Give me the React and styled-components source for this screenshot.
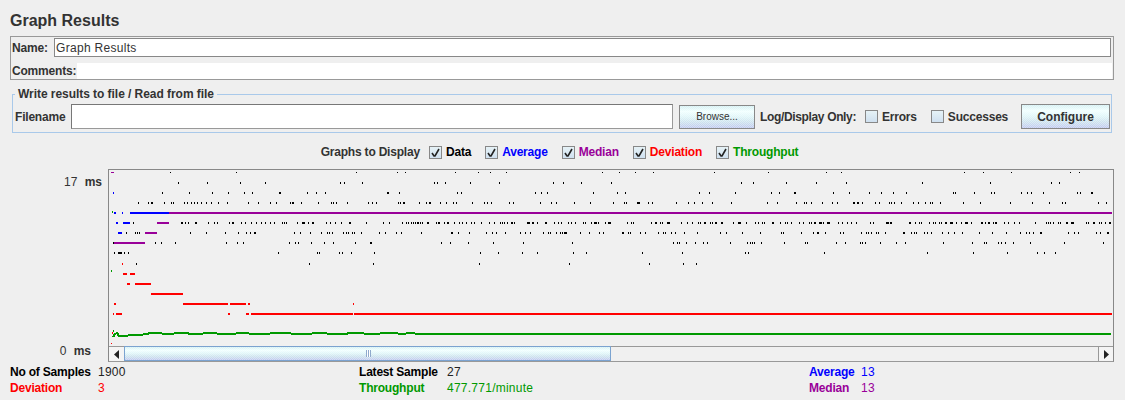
import React from "react";
import styled, { createGlobalStyle } from "styled-components";

const BLACK = "#000000";
const BLUE = "#0000ff";
const PURPLE = "#990099";
const RED = "#ff0000";
const GREEN = "#009900";

const GlobalStyle = createGlobalStyle`
  html, body {
    margin: 0;
    height: 400px;
    overflow: hidden;
    background: #efefef;
  }
  * {
    box-sizing: border-box;
  }
`;

// java metal look: a gradient with a fine dither over it
const SHINE = `repeating-conic-gradient(rgba(255, 255, 255, 0.35) 0 25%, transparent 0 50%) 0 0 / 2px 2px,
  linear-gradient(180deg, #d4f0f3 0%, #f0ffff 25%, #def5f8 50%, #cde3ee 72%, #bfc9ef 100%)`;

const Page = styled.div`
  width: 1125px;
  height: 400px;
  padding: 9px 11px 0 10px;
  font-family: "Liberation Sans", Arial, sans-serif;
  font-size: 12px;
  color: #333333;
`;

const Title = styled.h1`
  margin: 0;
  height: 27px;
  line-height: 24px;
  font-size: 16px;
  font-weight: bold;
`;

const NamePanel = styled.div`
  height: 44px;
  border: 1px solid #999999;
  padding: 1px 1px 0 0;
`;

const Row = styled.div`
  display: flex;
  align-items: center;
  height: ${({ height }) => height}px;
  margin-bottom: ${({ below }) => below || 0}px;
`;

const BoldLabel = styled.span`
  font-weight: bold;
  white-space: nowrap;
  letter-spacing: ${({ tight }) => (tight ? "-0.35px" : "-0.2px")};
  color: ${({ color }) => color || "#333333"};
  margin-right: ${({ gap }) => gap || 0}px;
  margin-left: ${({ left }) => left || 0}px;
  width: ${({ width }) => (width ? `${width}px` : "auto")};
`;

const NameInput = styled.div`
  flex: 1;
  height: 19px;
  margin-right: 1px;
  padding: 1px 0 0 1px;
  line-height: 17px;
  background: #ffffff;
  border: 1px solid #888888;
  letter-spacing: 0.3px;
`;

const CommentArea = styled.div`
  flex: 1;
  align-self: stretch;
  background: #ffffff;
`;

const FileFieldset = styled.fieldset`
  margin: 7px 2px 0;
  padding: 3px 1px 3px 2px;
  border: 1px solid #a9c9ea;
  min-width: 0;
`;

const Legend = styled.legend`
  margin-left: 0;
  padding: 0 3px;
  height: 14px;
  line-height: 15px;
  font-weight: bold;
  letter-spacing: -0.05px;
`;

const FileRow = styled.div`
  display: flex;
  align-items: center;
  height: 25px;
`;

const FileInput = styled.div`
  width: 602px;
  height: 25px;
  margin-right: 6px;
  background: #ffffff;
  border: 1px solid #999999;
  border-top-color: #777777;
  border-left-color: #777777;
`;

const Button = styled.button`
  width: ${({ width }) => width}px;
  height: ${({ height }) => height}px;
  margin-left: ${({ push }) => (push ? "auto" : 0)};
  padding: 0;
  border: 1px solid #888888;
  background: ${SHINE};
  font-family: inherit;
  font-size: ${({ small }) => (small ? "10px" : "12px")};
  font-weight: ${({ small }) => (small ? "normal" : "bold")};
  color: #333333;
`;

const Option = styled.label`
  display: flex;
  align-items: center;
  gap: 4px;
  margin-left: ${({ left }) => left}px;
  font-weight: bold;
  letter-spacing: -0.2px;
  color: ${({ color }) => color || "#333333"};
`;

const Box = styled.span`
  display: flex;
  width: 13px;
  height: 13px;
  border: 1px solid #888888;
  background: linear-gradient(180deg, #e6f2f6 0%, #cfe0f0 100%);
`;

const Check = ({ checked, color, label, left }) => (
  <Option color={color} left={left}>
    <Box>
      {checked && (
        <svg width="11" height="11" viewBox="0 0 11 11">
          <path d="M2 6l2 3 1 0 4-7" fill="none" stroke="#222222" strokeWidth="1.6" />
        </svg>
      )}
    </Box>
    {label}
  </Option>
);

const GraphsRow = styled.div`
  display: flex;
  align-items: center;
  justify-content: center;
  height: 36px;
  padding: 2px 5px 0 0;
  font-weight: bold;
  letter-spacing: -0.2px;
`;

const ChartSection = styled.div`
  display: flex;
  height: 193px;
`;

const Axis = styled.div`
  width: 98px;
  position: relative;
`;

const AxisLabel = styled.div`
  position: absolute;
  right: ${({ right }) => right}px;
  top: ${({ top }) => top}px;
  white-space: nowrap;
  word-spacing: 4px;
  b {
    font-weight: bold;
  }
`;

const Plot = styled.div`
  width: 1006px;
  border: 1px solid #888888;
  border-bottom: 1px solid #999999;
  background: #f0f0f0;
`;

const PlotSvg = styled.svg`
  display: block;
  width: 1004px;
  height: 176px;
`;

const Scrollbar = styled.div`
  display: flex;
  height: 15px;
  border-top: 1px solid #999999;
`;

const ArrowButton = styled.div`
  display: flex;
  align-items: center;
  justify-content: center;
  width: 15px;
  background: #f4f4f4;
  border-left: ${({ right }) => (right ? "1px solid #999999" : "0")};
`;

const Thumb = styled.div`
  display: flex;
  align-items: center;
  width: 487px;
  margin-top: -1px;
  padding-left: 241px;
  border: 1px solid #7ba3d0;
  background: ${SHINE};
`;

const Grip = styled.div`
  width: 5px;
  height: 7px;
  background: repeating-linear-gradient(90deg, #8fa9cc 0 1px, #ffffff 1px 2px);
`;

const Track = styled.div`
  flex: 1;
`;

const Stats = styled.div`
  display: grid;
  grid-template-columns: 88px 261px 88px 362px 52px 1fr;
  grid-auto-rows: 16px;
  align-items: center;
  margin-top: 2px;
`;

const StatValue = styled.span`
  color: ${({ color }) => color};
  letter-spacing: 0.25px;
`;

// x positions read off the screen, y is the top of each row of dots
const DOTS = [
  [172, 1, { 0: "511 709", 280: "229 352 376 526 595 631 679", 570: "97 148 196 250 433 595 769 814", 845: "358 415 499 676 703" }],
  [182, 2, { 0: "535 622 721 796", 280: "181 193 247 463 472 496 571 658 820 850", 570: "34 124 514 550 649 739 829", 845: "4 232 436 619 643" }],
  [192, 2, { 0: "487 568 637 685 733 757 838", 280: "1 82 109 136 322:2 358 532 544 766 784 802", 570: "70 142 166 388 418 496 604 628 673:2 790 838", 845: "13 73 109 145 184 325 331 388 439 448 529 547 559 595 697 706 739:2" }],
  [202, 2, { 0: "415 445 454:2 493 514 520 553 562 574 583 592 604 619 634 655 682 745 775 811 829", 280: "31 37:2 64 115 154 160 169 202 265 277 289 355 361 370:2 418 439 448:2 481 499 520 529 577 613 622 634 688 700 781 814 829 883", 570: "13 61 130 163 169 202:3 235 247 319 355 373 397 427 484 592 622 679 703 709 724 757 787 802", 845: "25:2 37:2 52 91 103 133 139 148 169 205 220 241 256 262 286 355 406 496 562 613 652 661 760 784" }],
  [222, 2, { 0: "400 543:2 556 565 586:2 625 643 652 688 697:2 724 736 754 769 784 796 811 823", 280: "7 13 19 52 67:3 85 97:2 139 151 166 184 208:2 259 310 328 367 379 385 394 400 406 412:2 421 427 442:2 469 475:2 493 502:2 523 538 547 559 574 583 604 628 643 661 667 673 682 694:2 703 742:3 757:2 772 796:2 823 835 844 865 874", 570: "4 16 40 46 64 73:3 85 106 115:3 172 184 190 244 256:2 271 277 292:3 334 352 367 385 391 403:2 421 427 436:2 454:2 490 505:3 529 556 565 577 583 607:2 631 646 652 664 688 700 718 724 733:2 748:3 760 772:3 805 817", 845: "7 19 34 76 85 124:3 136:2 193:2 211 223 229 253 265 271 283 289 301:2 316:3 334 349 361:3 379 409:2 421 430:2 445 451:2 478 490 508 523 571 604 610 616 625 640 646 664:2 679:3 724 730 745:2 763 769 781 793:2" }],
  [232, 2, { 0: "379 406 412 418 571 619 676 715 739 751 763:2", 280: "43 61 91 124 142 148 157 190 199 205 217 223 244 298 316 349 364 424 514:2 535 568 619 637 649 676 721 736 751 790 805 811 829 841 847 853:3", 570: "31 58 88 100 157:2 175 181 211 226 265 280 286 304 316 343 382 451 469 517 571 634 640 694 730 742:2 766 811 820", 845: "49 64 70 79 94 100 121 175:2 199 208 214 238 247 259 292 310 328 352 403 442 484 526 544 553 565 586:2 670 688 700 754 766 787:2" }],
  [242, 2, { 0: "340 465 484 526 679 712 730", 280: "28 46 55 94 133 160 226 271:2 484 511 565 640 730 877", 570: "7 310 322 328 349 376 400 412 481 532 541 547 553 574 643 706 712 799 826", 845: "1 46 52 61 106 154 181 295 382 418 424 460 469 481 505 556 658 775" }],
  [252, 2, { 0: "343 355:4 373 385 835", 280: "112 118 178 187 214 283 601 655 727 772 880", 570: "10 49 217 337 526 535 763", 845: "247 385 487 577 598 631" }],
  [263, 2, { 0: "409", 280: "88 280 598 868", 570: "238 340 379" }],
];

// x, y, width, height, colour
const SEGMENTS = [
  [111, 172, 3, 1, PURPLE],
  [113, 192, 1, 2, BLUE],
  [112, 211, 1, 2, GREEN],
  [114, 212, 2, 2, BLUE],
  [122, 212, 1, 2, BLUE],
  [130, 212, 39, 2, BLUE],
  [169, 212, 943, 2, PURPLE],
  [116, 222, 2, 2, BLUE],
  [123, 222, 7, 2, BLUE],
  [157, 222, 12, 2, PURPLE],
  [118, 232, 4, 2, BLUE],
  [145, 232, 12, 2, PURPLE],
  [114, 242, 31, 2, PURPLE],
  [122, 263, 1, 2, RED],
  [111, 270, 1, 2, GREEN],
  [123, 273, 4, 2, RED],
  [130, 273, 5, 2, RED],
  [127, 283, 3, 2, RED],
  [135, 283, 16, 2, RED],
  [151, 293, 32, 2, RED],
  [114, 303, 2, 2, RED],
  [183, 303, 45, 2, RED],
  [230, 303, 16, 2, RED],
  [248, 303, 2, 2, RED],
  [353, 303, 1, 2, RED],
  [113, 313, 1, 2, RED],
  [116, 313, 6, 2, RED],
  [228, 313, 2, 2, RED],
  [246, 313, 3, 2, RED],
  [251, 313, 102, 2, RED],
  [354, 313, 758, 2, RED],
  [112, 332, 1, 2, RED],
  [113, 330, 1, 2, GREEN],
  [111, 343, 1, 1, RED],
];

const GREEN_LINE =
  "113,337 115,334 117,333 119,336 126,336 130,335 140,335 146,334 151,333 160,333 164,334 172,334 176,333 187,333 190,334 200,334 206,333 216,333 218,334 232,334 240,333 248,333 250,334 268,334 272,333 280,333 290,333 292,334 310,334 314,333 324,333 330,334 345,334 350,333 362,333 366,334 378,334 382,333 396,333 400,334 412,333 418,334 1111,334";

const dotRects = [];
DOTS.forEach(([y, h, crops]) => {
  Object.keys(crops).forEach((origin) => {
    crops[origin].split(" ").forEach((item) => {
      const [zoomX, w] = item.split(":").map(Number);
      dotRects.push({ x: Number(origin) + Math.floor(zoomX / 3), y, w: w || 1, h });
    });
  });
});

const PlotDrawing = () => (
  <PlotSvg viewBox="109 170 1004 176" shapeRendering="crispEdges">
    {dotRects.map((d, i) => (
      <rect key={i} x={d.x} y={d.y} width={d.w} height={d.h} fill={BLACK} />
    ))}
    {SEGMENTS.map(([x, y, w, h, fill], i) => (
      <rect key={i} x={x} y={y} width={w} height={h} fill={fill} />
    ))}
    <polyline points={GREEN_LINE} fill="none" stroke={GREEN} strokeWidth="2" />
  </PlotSvg>
);

const Arrow = ({ flip }) => (
  <svg width="6" height="9" viewBox="0 0 6 9">
    <path d={flip ? "M1 0l5 4.5L1 9z" : "M5 0L0 4.5 5 9z"} fill="#222222" />
  </svg>
);

const App = () => {
  return (
    <Page>
      <GlobalStyle />
      <Title>Graph Results</Title>
      <NamePanel>
        <Row height={19} below={6}>
          <BoldLabel left={1} gap={5} width={37}>Name:</BoldLabel>
          <NameInput>Graph Results</NameInput>
        </Row>
        <Row height={16}>
          <BoldLabel left={1} width={65}>Comments:</BoldLabel>
          <CommentArea />
        </Row>
      </NamePanel>
      <FileFieldset>
        <Legend>Write results to file / Read from file</Legend>
        <FileRow>
          <BoldLabel width={56}>Filename</BoldLabel>
          <FileInput />
          <Button small width={76} height={24}>
            Browse...
          </Button>
          <BoldLabel tight left={5} width={105}>Log/Display Only:</BoldLabel>
          <Check label="Errors" left={0} />
          <Check label="Successes" left={14} />
          <Button push width={89} height={25}>
            Configure
          </Button>
        </FileRow>
      </FileFieldset>
      <GraphsRow>
        <span>Graphs to Display</span>
        <Check checked label="Data" color={BLACK} left={9} />
        <Check checked label="Average" color={BLUE} left={14} />
        <Check checked label="Median" color={PURPLE} left={14} />
        <Check checked label="Deviation" color={RED} left={14} />
        <Check checked label="Throughput" color={GREEN} left={14} />
      </GraphsRow>
      <ChartSection>
        <Axis>
          <AxisLabel right={6} top={6}>
            17 <b>ms</b>
          </AxisLabel>
          <AxisLabel right={17} top={175}>
            0 <b>ms</b>
          </AxisLabel>
        </Axis>
        <Plot>
          <PlotDrawing />
          <Scrollbar>
            <ArrowButton>
              <Arrow />
            </ArrowButton>
            <Thumb>
              <Grip />
            </Thumb>
            <Track />
            <ArrowButton right>
              <Arrow flip />
            </ArrowButton>
          </Scrollbar>
        </Plot>
      </ChartSection>
      <Stats>
        <BoldLabel color={BLACK}>No of Samples</BoldLabel>
        <StatValue color="#222222">1900</StatValue>
        <BoldLabel color={BLACK}>Latest Sample</BoldLabel>
        <StatValue color="#222222">27</StatValue>
        <BoldLabel color={BLUE}>Average</BoldLabel>
        <StatValue color={BLUE}>13</StatValue>
        <BoldLabel color={RED}>Deviation</BoldLabel>
        <StatValue color={RED}>3</StatValue>
        <BoldLabel color={GREEN}>Throughput</BoldLabel>
        <StatValue color={GREEN}>477.771/minute</StatValue>
        <BoldLabel color={PURPLE}>Median</BoldLabel>
        <StatValue color={PURPLE}>13</StatValue>
      </Stats>
    </Page>
  );
};

export default App;
